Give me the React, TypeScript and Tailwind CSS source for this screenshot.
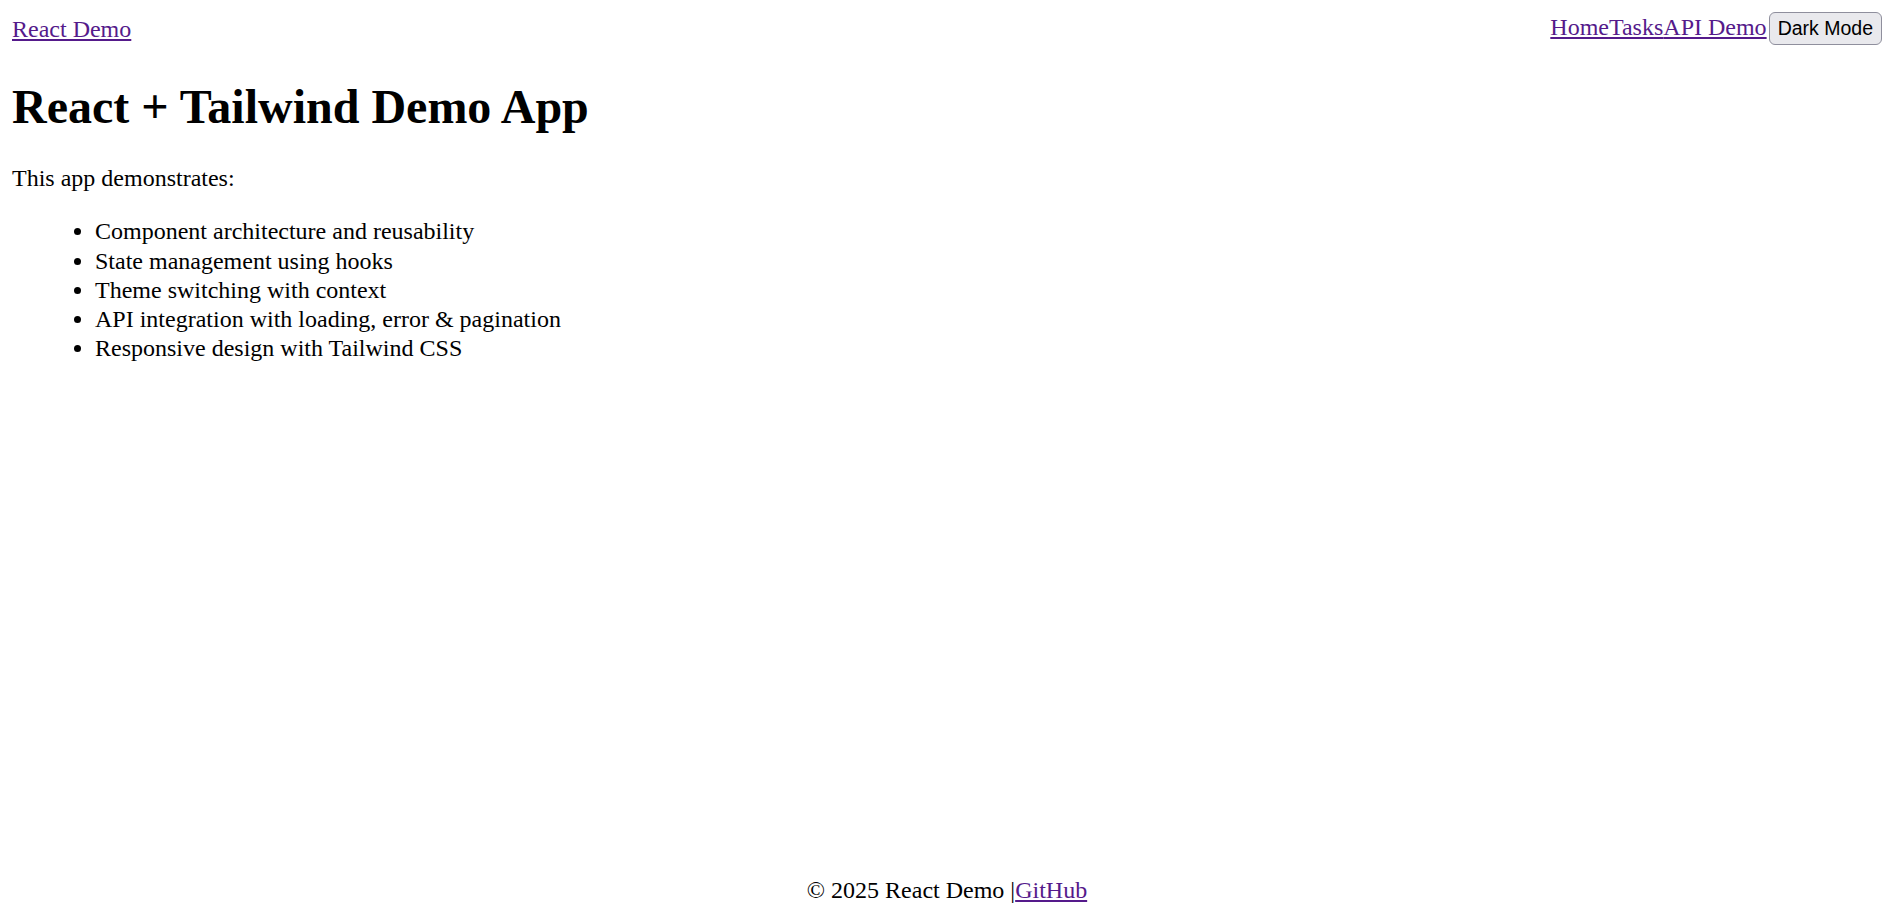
import { useState } from "react";

const features = [
  "Component architecture and reusability",
  "State management using hooks",
  "Theme switching with context",
  "API integration with loading, error & pagination",
  "Responsive design with Tailwind CSS",
];

const linkCls = "text-[#551a8b] underline";

const Header = () => {
  const [dark, setDark] = useState(false);
  return (
    <header className="flex justify-between items-center">
      <a href="#" className={`${linkCls} mt-[2px]`}>React Demo</a>
      <nav className="flex">
        <a href="#" className={`${linkCls} mt-[1px]`}>Home</a>
        <a href="#" className={`${linkCls} mt-[1px]`}>Tasks</a>
        <a href="#" className={`${linkCls} mt-[1px]`}>API Demo</a>
        <button
          onClick={() => setDark(!dark)}
          className="ml-[2px] h-[33px] px-[8px] bg-[#e9e9ed] border border-[#8f8f9d] rounded-[6px] text-black text-[19.5px] leading-[normal] font-['Liberation_Sans',sans-serif]"
        >
          {dark ? "Light Mode" : "Dark Mode"}
        </button>
      </nav>
    </header>
  );
};

export default function App() {
  return (
    <div className="min-h-screen flex flex-col px-[12px] pt-[12px] pb-[11px] bg-white text-black text-[24px] leading-[1.22] font-['Liberation_Serif',serif]">
      <Header />

      <main className="flex-1">
        <h1 className="text-[48px] font-bold leading-[1.21] mt-[33px] mb-[28px]">React + Tailwind Demo App</h1>
        <p className="my-[24px]">This app demonstrates:</p>
        <ul className="list-disc pl-[83px] my-[24px]">
          {features.map((f) => (
            <li key={f}>{f}</li>
          ))}
        </ul>
      </main>

      <footer className="text-center">
        © 2025 React Demo |<a href="#" className={linkCls}>GitHub</a>
      </footer>
    </div>
  );
}
